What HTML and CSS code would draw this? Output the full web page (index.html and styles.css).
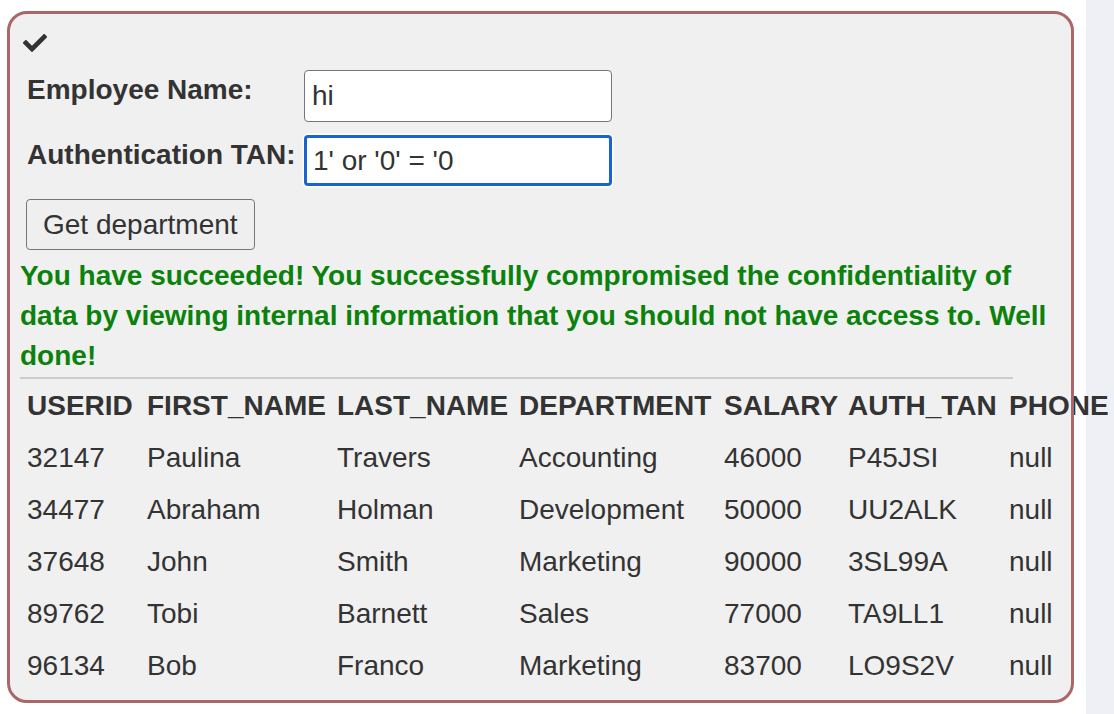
FILE: index.html
```html
<!DOCTYPE html>
<html lang="en">
<head>
<meta charset="utf-8">
<title>SQL Injection</title>
<link rel="stylesheet" href="styles.css">
</head>
<body>
<div class="attack-container">
  <div class="status">
    <svg class="check" viewBox="0 65 512 382" width="24" height="18" aria-hidden="true"><path fill="#333" d="M173.898 439.404l-166.4-166.4c-9.997-9.997-9.997-26.206 0-36.204l36.203-36.204c9.997-9.998 26.207-9.998 36.204 0L192 312.69 432.095 72.596c9.997-9.997 26.207-9.997 36.204 0l36.203 36.204c9.997 9.997 9.997 26.206 0 36.204l-294.4 294.401c-9.998 9.997-26.207 9.997-36.204-.001z"/></svg>
  </div>
  <form class="attack-form">
    <div class="form-grid">
      <label class="form-label" for="name">Employee Name:</label>
      <input class="text-input" id="name" type="text" value="hi">
      <label class="form-label" for="tan">Authentication TAN:</label>
      <input class="text-input is-focused" id="tan" type="text" value="1' or '0' = '0">
    </div>
    <button class="btn" type="button">Get department</button>
  </form>
  <div class="feedback">You have succeeded! You successfully compromised the confidentiality of data by viewing internal information that you should not have access to. Well done!</div>
  <hr class="divider">
  <table class="results">
    <thead>
      <tr><th>USERID</th><th>FIRST_NAME</th><th>LAST_NAME</th><th>DEPARTMENT</th><th>SALARY</th><th>AUTH_TAN</th><th>PHONE</th></tr>
    </thead>
    <tbody>
      <tr><td>32147</td><td>Paulina</td><td>Travers</td><td>Accounting</td><td>46000</td><td>P45JSI</td><td>null</td></tr>
      <tr><td>34477</td><td>Abraham</td><td>Holman</td><td>Development</td><td>50000</td><td>UU2ALK</td><td>null</td></tr>
      <tr><td>37648</td><td>John</td><td>Smith</td><td>Marketing</td><td>90000</td><td>3SL99A</td><td>null</td></tr>
      <tr><td>89762</td><td>Tobi</td><td>Barnett</td><td>Sales</td><td>77000</td><td>TA9LL1</td><td>null</td></tr>
      <tr><td>96134</td><td>Bob</td><td>Franco</td><td>Marketing</td><td>83700</td><td>LO9S2V</td><td>null</td></tr>
    </tbody>
  </table>
</div>
</body>
</html>
```

FILE: styles.css
```css
html, body {
  margin: 0;
  padding: 0;
}

html {
  background: linear-gradient(to right, #ffffff 1086px, #eff0f5 1086px);
  min-height: 100%;
}

body {
  font-family: "Liberation Sans", Arial, Helvetica, sans-serif;
  font-size: 28px;
  line-height: 40px;
  color: #333;
  padding: 14px 43px 0 10px;
  height: 714px;
  box-sizing: border-box;
  overflow: hidden;
}

.attack-container {
  background: #f0f0f0;
  outline: 3px solid #a96767;
  border-radius: 17px;
  width: 1061px;
  height: 686px;
  box-sizing: border-box;
  padding: 0 10px 9px 10px;
}

.status {
  height: 56px;
  box-sizing: border-box;
  padding: 20px 0 0 3px;
}

.check {
  display: block;
}

.attack-form {
  margin: 0;
}

.form-grid {
  display: grid;
  grid-template-columns: 277px 308px;
  grid-auto-rows: 52px;
  row-gap: 13px;
  padding-left: 7px;
}

.form-label {
  font-weight: bold;
  align-self: start;
}

.text-input {
  font: inherit;
  color: #333;
  width: 308px;
  height: 52px;
  box-sizing: border-box;
  border: 1px solid #767676;
  border-radius: 4px;
  background: #fff;
  padding: 0 7px;
  margin: 0;
  outline: none;
}

.text-input.is-focused {
  border: 3px solid #1764d2;
  padding: 0 6px;
  height: 51px;
  box-shadow: 0 0 0 1.5px #fff;
}

.btn {
  display: block;
  font: inherit;
  color: #333;
  height: 51px;
  margin: 12px 0 0 6px;
  padding: 0 16px;
  border: 1px solid #767676;
  border-radius: 4px;
  background: #efefef;
}

.feedback {
  margin-top: 6px;
  font-weight: bold;
  color: #0b820b;
}

.divider {
  width: 993px;
  height: 2px;
  border: 0;
  margin: 1px 0 0 0;
  background: #cccccc;
}

.results {
  margin-top: 1px;
  border-collapse: collapse;
  border-spacing: 0;
  table-layout: fixed;
  width: 1090px;
  white-space: nowrap;
}

.results th,
.results td {
  height: 52px;
  padding: 0 0 0 7px;
  text-align: left;
  vertical-align: middle;
}

.results th {
  font-weight: bold;
}

.results th:nth-child(1) { width: 113px; }
.results th:nth-child(2) { width: 183px; }
.results th:nth-child(3) { width: 175px; }
.results th:nth-child(4) { width: 198px; }
.results th:nth-child(5) { width: 117px; }
.results th:nth-child(6) { width: 154px; }
```
